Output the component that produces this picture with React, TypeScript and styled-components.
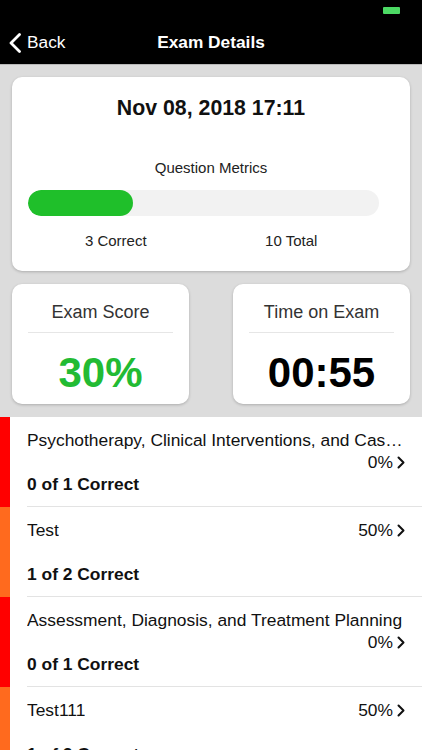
import React from "react";
import styled, { createGlobalStyle } from "styled-components";

const Global = createGlobalStyle`
  html, body { margin: 0; padding: 0; background: #dcdcdc; }
  body { font-family: "Liberation Sans", Arial, sans-serif; -webkit-font-smoothing: antialiased; }
  * { box-sizing: border-box; }
`;

const Page = styled.div`
  width: 422px;
  height: 750px;
  overflow: hidden;
  background: #dcdcdc;
  display: flex;
  flex-direction: column;
`;

const TopBar = styled.header`
  flex-shrink: 0;
  background: #000;
  height: 65px;
  display: flex;
  flex-direction: column;
  border-bottom: 1px solid #b8b8b8;
`;

const StatusRow = styled.div`
  height: 20px;
  display: flex;
  justify-content: flex-end;
  align-items: flex-start;
  padding: 7px 22px 0 0;
`;

const Battery = styled.div`
  width: 17px;
  height: 7px;
  border-radius: 1px;
  background: #4cd964;
`;

const NavRow = styled.div`
  flex: 1;
  display: grid;
  grid-template-columns: 1fr auto 1fr;
  align-items: center;
  padding-top: 1px;
`;

const BackButton = styled.div`
  display: flex;
  align-items: center;
  gap: 6px;
  color: #fff;
  font-size: 17.3px;
  padding-left: 9px;
`;

const Title = styled.div`
  color: #fff;
  font-size: 17.3px;
  font-weight: 700;
`;

const Content = styled.div`
  flex-shrink: 0;
  padding: 12px 12px 13px 12px;
  display: flex;
  flex-direction: column;
  gap: 13px;
`;

const Card = styled.div`
  background: #fff;
  border-radius: 10px;
  box-shadow: 0 1px 3px rgba(0, 0, 0, 0.22);
`;

const MainCard = styled(Card)`
  height: 194px;
  padding: 17px 31px 0 16px;
  display: flex;
  flex-direction: column;
  align-items: stretch;
`;

const DateText = styled.div`
  text-align: center;
  font-size: 21.3px;
  font-weight: 700;
  color: #111;
  padding-left: 15px;
  line-height: 28px;
`;

const MetricsLabel = styled.div`
  text-align: center;
  font-size: 15px;
  color: #222;
  margin-top: 37px;
  padding-left: 15px;
  line-height: 18px;
`;

const Track = styled.div`
  margin-top: 13px;
  height: 26px;
  border-radius: 13px;
  background: #f2f2f2;
  overflow: hidden;
`;

const Fill = styled.div`
  height: 100%;
  border-radius: 13px;
  background: #1fbf2a;
`;

const MetricRow = styled.div`
  display: grid;
  grid-template-columns: 1fr 1fr;
  margin-top: 16px;
  font-size: 15px;
  color: #222;
  line-height: 18px;
`;

const MetricCell = styled.div`
  text-align: center;
`;

const StatRow = styled.div`
  display: grid;
  grid-template-columns: 177px 177px;
  justify-content: space-between;
`;

const StatCard = styled(Card)`
  height: 120px;
  padding: 0 16px;
  display: flex;
  flex-direction: column;
  align-items: stretch;
`;

const StatTitle = styled.div`
  text-align: center;
  font-size: 18px;
  color: #333;
  height: 49px;
  line-height: 57px;
  border-bottom: 1px solid #e6e6e6;
`;

const StatValue = styled.div<{ $color: string }>`
  flex: 1;
  display: flex;
  align-items: center;
  justify-content: center;
  font-size: 42px;
  font-weight: 700;
  color: ${(p) => p.$color};
  padding-top: 9px;
`;

const List = styled.div`
  background: #fff;
  flex: 1;
  min-height: 0;
  overflow: hidden;
`;

const Row = styled.div<{ $bar: string }>`
  height: 90px;
  flex-shrink: 0;
  display: flex;
  border-left: 10px solid ${(p) => p.$bar};
`;

const RowBody = styled.div<{ $last?: boolean }>`
  flex: 1;
  margin-left: 17px;
  padding: 12px 17px 0 0;
  border-bottom: ${(p) => (p.$last ? "none" : "1px solid #e3e3e3")};
  display: flex;
  flex-direction: column;
  min-width: 0;
`;

const RowTop = styled.div`
  height: 44px;
  display: flex;
  flex-wrap: wrap;
  align-content: flex-start;
  min-width: 0;
`;

const RowTitle = styled.div`
  font-size: 17.4px;
  line-height: 22px;
  color: #111;
  white-space: nowrap;
  overflow: hidden;
  text-overflow: ellipsis;
  max-width: 100%;
  min-width: 0;
`;

const RowPercent = styled.div`
  margin-left: auto;
  display: flex;
  align-items: center;
  gap: 4px;
  font-size: 17.4px;
  line-height: 22px;
  color: #111;
`;

const RowCorrect = styled.div`
  font-size: 17.4px;
  font-weight: 700;
  color: #111;
  line-height: 22px;
`;

const Chevron = () => (
  <svg width="8" height="13" viewBox="0 0 8 13" fill="none">
    <polyline points="1.5,1.5 6.5,6.5 1.5,11.5" stroke="#111" strokeWidth="2" strokeLinecap="round" strokeLinejoin="round" />
  </svg>
);

const BackChevron = () => (
  <svg width="12" height="20" viewBox="0 0 12 20" fill="none">
    <polyline points="10.5,1.5 2,10 10.5,18.5" stroke="#fff" strokeWidth="2.8" strokeLinecap="round" strokeLinejoin="round" />
  </svg>
);

const topics = [
  { title: "Psychotherapy, Clinical Interventions, and Case Management", pct: "0%", correct: "0 of 1 Correct", bar: "#ff0000" },
  { title: "Test", pct: "50%", correct: "1 of 2 Correct", bar: "#ff6a1e" },
  { title: "Assessment, Diagnosis, and Treatment Planning", pct: "0%", correct: "0 of 1 Correct", bar: "#ff0000" },
  { title: "Test111", pct: "50%", correct: "1 of 2 Correct", bar: "#ff6a1e" },
];

export default function App() {
  const correct = 3;
  const total = 10;
  return (
    <Page>
      <Global />
      <TopBar>
        <StatusRow>
          <Battery />
        </StatusRow>
        <NavRow>
          <BackButton>
            <BackChevron />
            <span>Back</span>
          </BackButton>
          <Title>Exam Details</Title>
          <div />
        </NavRow>
      </TopBar>
      <Content>
        <MainCard>
          <DateText>Nov 08, 2018 17:11</DateText>
          <MetricsLabel>Question Metrics</MetricsLabel>
          <Track>
            <Fill style={{ width: `${(correct / total) * 100}%` }} />
          </Track>
          <MetricRow>
            <MetricCell>{correct} Correct</MetricCell>
            <MetricCell>{total} Total</MetricCell>
          </MetricRow>
        </MainCard>
        <StatRow>
          <StatCard>
            <StatTitle>Exam Score</StatTitle>
            <StatValue $color="#22bb33">30%</StatValue>
          </StatCard>
          <StatCard>
            <StatTitle>Time on Exam</StatTitle>
            <StatValue $color="#000">00:55</StatValue>
          </StatCard>
        </StatRow>
      </Content>
      <List>
        {topics.map((t, i) => (
          <Row key={i} $bar={t.bar}>
            <RowBody $last={i === topics.length - 1}>
              <RowTop>
                <RowTitle>{t.title}</RowTitle>
                <RowPercent>
                  <span>{t.pct}</span>
                  <Chevron />
                </RowPercent>
              </RowTop>
              <RowCorrect>{t.correct}</RowCorrect>
            </RowBody>
          </Row>
        ))}
      </List>
    </Page>
  );
}
